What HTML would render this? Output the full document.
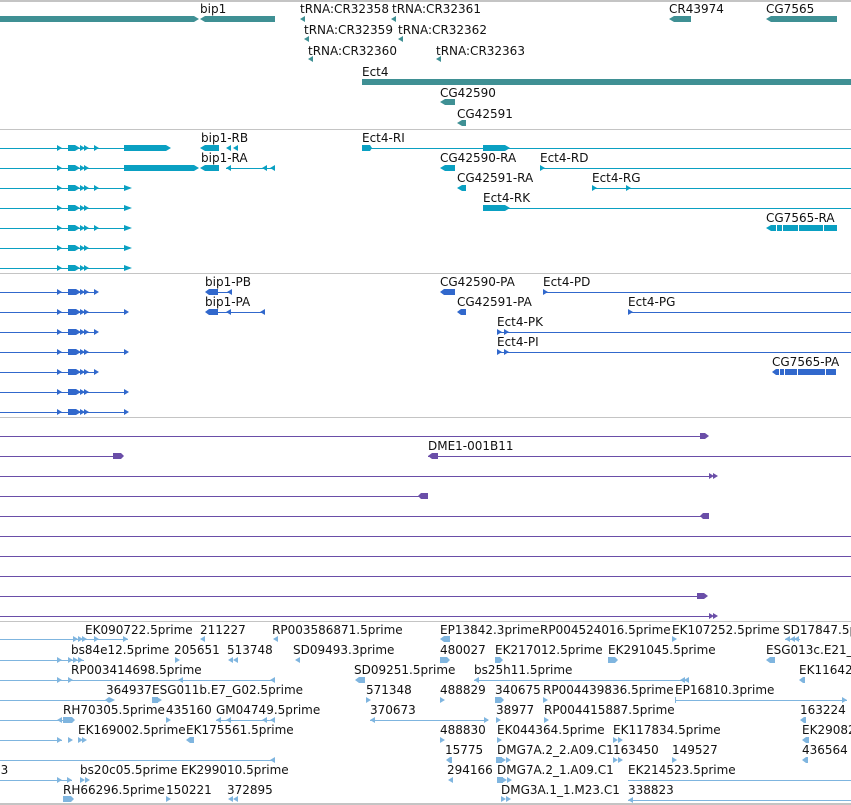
<!DOCTYPE html>
<html><head><meta charset="utf-8">
<style>
html,body{margin:0;padding:0;background:#fff;width:851px;height:805px;overflow:hidden}
svg{display:block}
rect{shape-rendering:crispEdges}
text{font-family:"DejaVu Sans","Liberation Sans",sans-serif;font-size:12px;fill:#111}
</style></head><body>
<svg width="851" height="805" viewBox="0 0 851 805">
<defs>
<polygon id="r" points="0,-3 5,0 0,3"/>
<polygon id="l" points="5,-3 0,0 5,3"/>
</defs>
<g fill="#c4c4c4">
<rect x="0" y="0" width="851" height="2"/>
<rect x="0" y="129" width="851" height="1"/>
<rect x="0" y="273" width="851" height="1"/>
<rect x="0" y="417" width="851" height="1"/>
<rect x="0" y="621" width="851" height="1"/>
<rect x="0" y="803" width="851" height="2"/>
</g>

<!-- GENE TRACK teal -->
<g fill="#3f9094">
<rect x="0" y="16" width="194" height="6"/><polygon points="194,16 199,19 194,22"/>
<polygon points="200,19 205,16 275,16 275,22 205,22"/>
<use href="#l" x="300" y="19"/><use href="#l" x="391" y="19"/>
<use href="#l" x="304" y="39"/><use href="#l" x="398" y="39"/>
<use href="#l" x="308" y="59"/><use href="#l" x="436" y="59"/>
<polygon points="669,19 674,16 691,16 691,22 674,22"/>
<polygon points="766,19 771,16 837,16 837,22 771,22"/>
<rect x="362" y="79" width="489" height="6"/>
<polygon points="440,102 445,99 455,99 455,105 445,105"/>
<polygon points="457,123 462,120 466,120 466,126 462,126"/>
</g>
<text x="200" y="13">bip1</text>
<text x="300" y="13">tRNA:CR32358</text><text x="392" y="13">tRNA:CR32361</text>
<text x="304" y="34">tRNA:CR32359</text><text x="398" y="34">tRNA:CR32362</text>
<text x="308" y="55">tRNA:CR32360</text><text x="436" y="55">tRNA:CR32363</text>
<text x="669" y="13">CR43974</text><text x="766" y="13">CG7565</text>
<text x="362" y="76">Ect4</text>
<text x="440" y="97">CG42590</text>
<text x="457" y="118">CG42591</text>

<!-- RNA TRACK cyan -->
<g fill="#0aa0c2" stroke="none">
<g id="rl1"><rect x="0" y="148" width="124" height="1"/>
<use href="#r" x="57" y="148"/><rect x="68" y="145" width="7" height="6"/><use href="#r" x="75" y="148"/><use href="#r" x="80" y="148"/><use href="#r" x="84" y="148"/><use href="#r" x="94" y="148"/>
<rect x="124" y="145" width="42" height="6"/><polygon points="166,145 171,148 166,151"/></g>
<g><rect x="0" y="168" width="124" height="1"/>
<use href="#r" x="57" y="168"/><rect x="68" y="165" width="7" height="6"/><use href="#r" x="75" y="168"/><use href="#r" x="80" y="168"/><use href="#r" x="84" y="168"/>
<rect x="124" y="165" width="70" height="6"/><polygon points="194,165 199,168 194,171"/></g>
<g id="rs1"><rect x="0" y="188" width="128" height="1"/>
<use href="#r" x="57" y="188"/><rect x="68" y="185" width="7" height="6"/><use href="#r" x="75" y="188"/><use href="#r" x="80" y="188"/><use href="#r" x="84" y="188"/><use href="#r" x="94" y="188"/><polygon points="124,185 132,188 124,191"/></g>
<g id="rs2"><rect x="0" y="208" width="128" height="1"/>
<use href="#r" x="57" y="208"/><rect x="68" y="205" width="7" height="6"/><use href="#r" x="75" y="208"/><use href="#r" x="80" y="208"/><use href="#r" x="84" y="208"/><polygon points="124,205 132,208 124,211"/></g>
<use href="#rs1" y="40"/><use href="#rs2" y="40"/><use href="#rs2" y="60"/>
<polygon points="200,148 205,145 219,145 219,151 205,151"/><use href="#l" x="226" y="148"/><use href="#l" x="233" y="148"/>
<polygon points="200,168 205,165 219,165 219,171 205,171"/><rect x="226" y="168" width="49" height="1"/><use href="#l" x="226" y="168"/><use href="#l" x="262" y="168"/><use href="#l" x="270" y="168"/>
<rect x="362" y="148" width="489" height="1"/><polygon points="362,145 370,145 372,148 370,151 362,151"/>
<rect x="483" y="145" width="22" height="6"/><use href="#r" x="505" y="148"/>
<polygon points="440,168 445,165 455,165 455,171 445,171"/>
<rect x="540" y="168" width="311" height="1"/><use href="#r" x="540" y="168"/>
<polygon points="457,188 462,185 466,185 466,191 462,191"/>
<rect x="592" y="188" width="259" height="1"/><use href="#r" x="592" y="188"/><use href="#r" x="626" y="188"/>
<rect x="483" y="208" width="368" height="1"/><rect x="483" y="205" width="22" height="6"/><use href="#r" x="505" y="208"/>
<polygon points="766,228 771,225 837,225 837,231 771,231"/>
</g>
<g fill="#fff"><rect x="776" y="225" width="1" height="6"/><rect x="782" y="225" width="1" height="6"/><rect x="798" y="225" width="1" height="6"/><rect x="823" y="225" width="1" height="6"/></g>
<text x="201" y="142">bip1-RB</text><text x="201" y="162">bip1-RA</text>
<text x="362" y="142">Ect4-RI</text>
<text x="440" y="162">CG42590-RA</text><text x="540" y="162">Ect4-RD</text>
<text x="457" y="182">CG42591-RA</text><text x="592" y="182">Ect4-RG</text>
<text x="483" y="202">Ect4-RK</text>
<text x="766" y="222">CG7565-RA</text>

<!-- PROTEIN blue -->
<g fill="#3168cc">
<g id="ps1"><rect x="0" y="292" width="96" height="1"/><use href="#r" x="57" y="292"/><rect x="68" y="289" width="8" height="6"/><use href="#r" x="76" y="292"/><use href="#r" x="80" y="292"/><use href="#r" x="84" y="292"/><use href="#r" x="94" y="292"/></g>
<g id="ps2"><rect x="0" y="312" width="126" height="1"/><use href="#r" x="57" y="312"/><rect x="68" y="309" width="8" height="6"/><use href="#r" x="76" y="312"/><use href="#r" x="80" y="312"/><use href="#r" x="84" y="312"/><use href="#r" x="124" y="312"/></g>
<use href="#ps1" y="40"/><use href="#ps2" y="40"/><use href="#ps1" y="80"/><use href="#ps2" y="80"/><use href="#ps2" y="100"/>
<polygon points="205,292 209,289 218,289 218,295 209,295"/><rect x="218" y="292" width="13" height="1"/><use href="#l" x="227" y="292"/>
<polygon points="205,312 209,309 218,309 218,315 209,315"/><rect x="218" y="312" width="46" height="1"/><use href="#l" x="226" y="312"/><use href="#l" x="260" y="312"/>
<polygon points="440,292 444,289 455,289 455,295 444,295"/>
<rect x="543" y="292" width="308" height="1"/><use href="#r" x="543" y="292"/>
<polygon points="457,312 461,309 466,309 466,315 461,315"/>
<rect x="628" y="312" width="223" height="1"/><use href="#r" x="628" y="312"/>
<rect x="497" y="332" width="354" height="1"/><use href="#r" x="497" y="332"/><use href="#r" x="504" y="332"/>
<rect x="497" y="352" width="354" height="1"/><use href="#r" x="497" y="352"/><use href="#r" x="504" y="352"/>
<polygon points="772,372 776,369 836,369 836,375 776,375"/>
</g>
<g fill="#fff"><rect x="779" y="369" width="1" height="6"/><rect x="784" y="369" width="1" height="6"/><rect x="797" y="369" width="1" height="6"/><rect x="825" y="369" width="1" height="6"/></g>
<text x="205" y="286">bip1-PB</text><text x="205" y="306">bip1-PA</text>
<text x="440" y="286">CG42590-PA</text><text x="543" y="286">Ect4-PD</text>
<text x="457" y="306">CG42591-PA</text><text x="628" y="306">Ect4-PG</text>
<text x="497" y="326">Ect4-PK</text><text x="497" y="346">Ect4-PI</text>
<text x="772" y="366">CG7565-PA</text>

<!-- PURPLE -->
<g fill="#6a4ea8">
<rect x="0" y="436" width="702" height="1"/><polygon points="700,433 705,433 709,436 705,439 700,439"/>
<rect x="0" y="456" width="118" height="1"/><polygon points="113,453 121,453 124,456 121,459 113,459"/>
<rect x="428" y="456" width="423" height="1"/><polygon points="428,456 432,453 438,453 438,459 432,459"/>
<rect x="0" y="476" width="712" height="1"/><use href="#r" x="709" y="476"/><use href="#r" x="713" y="476"/>
<rect x="0" y="496" width="420" height="1"/><polygon points="418,496 421,493 428,493 428,499 421,499"/>
<rect x="0" y="516" width="705" height="1"/><polygon points="700,516 703,513 709,513 709,519 703,519"/>
<rect x="0" y="536" width="851" height="1"/>
<rect x="0" y="556" width="851" height="1"/>
<rect x="0" y="576" width="851" height="1"/>
<rect x="0" y="596" width="702" height="1"/><polygon points="697,593 704,593 708,596 704,599 697,599"/>
<rect x="0" y="616" width="712" height="1"/><use href="#r" x="709" y="616"/><use href="#r" x="713" y="616"/>
</g>
<text x="428" y="450">DME1-001B11</text>

<!-- LIGHT BLUE ESTs -->
<g fill="#7fb5df">
<rect x="0" y="639" width="128" height="1"/><use href="#r" x="73" y="639"/><use href="#r" x="78" y="639"/><use href="#r" x="82" y="639"/><use href="#r" x="94" y="639"/><use href="#r" x="123" y="639"/>
<use href="#l" x="200" y="639"/><use href="#l" x="273" y="639"/>
<rect x="0" y="660" width="84" height="1"/><use href="#r" x="57" y="660"/><use href="#r" x="68" y="660"/><use href="#r" x="73" y="660"/><use href="#r" x="78" y="660"/>
<use href="#r" x="175" y="660"/><use href="#l" x="228" y="660"/><use href="#l" x="233" y="660"/><use href="#l" x="295" y="660"/>
<rect x="0" y="680" width="275" height="1"/><use href="#r" x="57" y="680"/><use href="#r" x="68" y="680"/><use href="#l" x="178" y="680"/><use href="#l" x="270" y="680"/>
<polygon points="355,680 359,677 365,677 365,683 359,683"/>
<rect x="0" y="700" width="110" height="1"/><polygon points="105,700 109,697 115,700 109,703"/><rect x="152" y="697" width="6" height="6"/><use href="#r" x="157" y="700"/>
<use href="#r" x="366" y="700"/>
<rect x="0" y="720" width="65" height="1"/><use href="#l" x="57" y="720"/><polygon points="63,717 72,717 75,720 72,723 63,723"/><use href="#r" x="166" y="720"/>
<rect x="216" y="720" width="57" height="1"/><use href="#l" x="216" y="720"/><use href="#l" x="226" y="720"/><use href="#l" x="262" y="720"/><use href="#l" x="270" y="720"/>
<rect x="370" y="720" width="118" height="1"/><use href="#l" x="370" y="720"/><use href="#r" x="484" y="720"/>
<rect x="0" y="740" width="62" height="1"/><use href="#r" x="57" y="740"/><use href="#r" x="68" y="740"/><use href="#r" x="78" y="740"/><use href="#r" x="82" y="740"/><polygon points="186,740 190,737 194,737 194,743 190,743"/>
<rect x="0" y="760" width="275" height="1"/><use href="#l" x="270" y="760"/>
<rect x="0" y="780" width="72" height="1"/><use href="#r" x="57" y="780"/><use href="#r" x="67" y="780"/><use href="#r" x="80" y="780"/><use href="#r" x="85" y="780"/>
<polygon points="63,796 71,796 74,799 71,802 63,802"/><use href="#r" x="166" y="799"/><use href="#l" x="228" y="799"/><use href="#l" x="233" y="799"/>
<polygon points="440,639 444,636 450,636 450,642 444,642"/><use href="#r" x="672" y="639"/><use href="#l" x="785" y="639"/><use href="#l" x="790" y="639"/><use href="#l" x="794" y="639"/><rect x="785" y="639" width="15" height="1"/>
<polygon points="440,657 447,657 450,660 447,663 440,663"/><polygon points="495,657 500,657 503,660 500,663 495,663"/><polygon points="608,657 615,657 618,660 615,663 608,663"/><polygon points="766,660 770,657 775,657 775,663 770,663"/>
<rect x="474" y="680" width="212" height="1"/><use href="#l" x="474" y="680"/><use href="#l" x="680" y="680"/><use href="#l" x="684" y="680"/><polygon points="799,680 803,677 805,677 805,683 803,683"/>
<use href="#r" x="440" y="700"/><polygon points="495,697 501,697 504,700 501,703 495,703"/><use href="#r" x="543" y="700"/>
<rect x="675" y="700" width="172" height="1"/><use href="#r" x="842" y="700"/><rect x="675" y="697" width="1" height="6"/>
<use href="#r" x="496" y="720"/><use href="#r" x="544" y="720"/><polygon points="800,720 804,717 806,717 806,723 804,723"/>
<use href="#r" x="440" y="740"/><use href="#r" x="497" y="740"/><use href="#r" x="613" y="740"/><use href="#r" x="618" y="740"/><polygon points="802,740 806,737 809,737 809,743 806,743"/>
<polygon points="446,760 450,757 452,757 452,763 450,763"/><rect x="496" y="757" width="6" height="6"/><use href="#r" x="501" y="760"/><use href="#r" x="506" y="760"/><use href="#r" x="613" y="760"/><use href="#r" x="618" y="760"/><use href="#r" x="672" y="760"/><polygon points="802,760 806,757 808,757 808,763 806,763"/>
<use href="#l" x="448" y="780"/><rect x="497" y="777" width="6" height="6"/><use href="#r" x="502" y="780"/><use href="#r" x="507" y="780"/>
<rect x="628" y="780" width="223" height="1"/>
<use href="#r" x="501" y="799"/><use href="#r" x="506" y="799"/>
<rect x="628" y="800" width="223" height="1"/><use href="#l" x="628" y="800"/>
</g>
<g>
<text x="85" y="634">EK090722.5prime</text><text x="200" y="634">211227</text><text x="272" y="634">RP003586871.5prime</text>
<text x="440" y="634">EP13842.3prime</text><text x="540" y="634">RP004524016.5prime</text><text x="672" y="634">EK107252.5prime</text><text x="783" y="634">SD17847.5prime</text>
<text x="71" y="654">bs84e12.5prime</text><text x="174" y="654">205651</text><text x="227" y="654">513748</text><text x="293" y="654">SD09493.3prime</text>
<text x="440" y="654">480027</text><text x="495" y="654">EK217012.5prime</text><text x="608" y="654">EK291045.5prime</text><text x="766" y="654">ESG013c.E21_G02.5prime</text>
<text x="71" y="674">RP003414698.5prime</text><text x="354" y="674">SD09251.5prime</text><text x="474" y="674">bs25h11.5prime</text><text x="799" y="674">EK116428.5prime</text>
<text x="106" y="694">364937</text><text x="152" y="694">ESG011b.E7_G02.5prime</text><text x="366" y="694">571348</text>
<text x="440" y="694">488829</text><text x="495" y="694">340675</text><text x="543" y="694">RP004439836.5prime</text><text x="675" y="694">EP16810.3prime</text>
<text x="63" y="714">RH70305.5prime</text><text x="166" y="714">435160</text><text x="216" y="714">GM04749.5prime</text><text x="370" y="714">370673</text>
<text x="496" y="714">38977</text><text x="544" y="714">RP004415887.5prime</text><text x="800" y="714">163224</text>
<text x="78" y="734">EK169002.5prime</text><text x="186" y="734">EK175561.5prime</text>
<text x="440" y="734">488830</text><text x="497" y="734">EK044364.5prime</text><text x="613" y="734">EK117834.5prime</text><text x="802" y="734">EK290823.5prime</text>
<text x="445" y="754">15775</text><text x="497" y="754">DMG7A.2_2.A09.C1</text><text x="613" y="754">163450</text><text x="672" y="754">149527</text><text x="802" y="754">436564</text>
<text x="-7" y="774">33</text><text x="80" y="774">bs20c05.5prime</text><text x="181" y="774">EK299010.5prime</text>
<text x="447" y="774">294166</text><text x="497" y="774">DMG7A.2_1.A09.C1</text><text x="628" y="774">EK214523.5prime</text>
<text x="63" y="794">RH66296.5prime</text><text x="166" y="794">150221</text><text x="227" y="794">372895</text>
<text x="501" y="794">DMG3A.1_1.M23.C1</text><text x="628" y="794">338823</text>
</g>
</svg>
</body></html>
